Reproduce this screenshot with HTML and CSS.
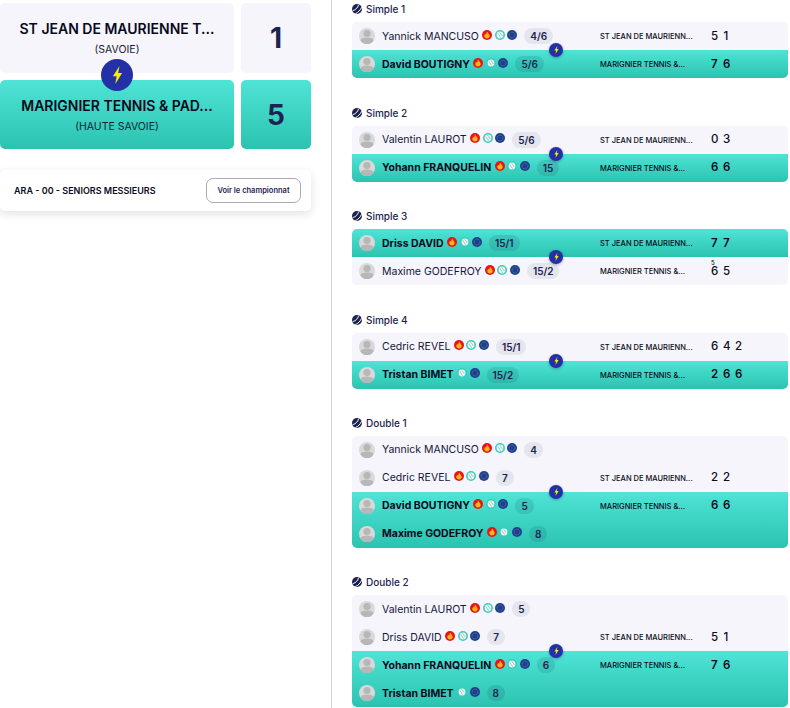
FILE: index.html
```html
<!DOCTYPE html>
<html lang="fr">
<head>
<meta charset="utf-8">
<title>Rencontre</title>
<link rel="stylesheet" href="styles.css">
</head>
<body>
<svg class="defs" width="0" height="0" aria-hidden="true">
  <defs>
    <symbol id="flame" viewBox="0 0 10 10"><circle cx="5" cy="5" r="5" fill="#e8141c"/><path d="M5.1 1.5C5.4 2.9 7.7 4 7.7 6 7.7 7.6 6.4 8.5 5 8.5S2.3 7.6 2.3 6C2.3 5 2.9 4.3 3.4 3.8 3.6 4.4 3.9 4.6 4.2 4.6 4.4 3.6 4.6 2.4 5.1 1.5Z" fill="#fdb515"/></symbol>
    <symbol id="ball" viewBox="0 0 10 10"><circle class="ball-ring" cx="5" cy="5" r="5"/><circle cx="5" cy="5" r="3.4" fill="#f2fbfa"/><path d="M2.8 3.2 5.6 7.8M4.6 2.1 7.4 6" stroke="#8fb5b5" stroke-width=".8" fill="none"/></symbol>
    <symbol id="eu" viewBox="0 0 10 10"><circle cx="5" cy="5" r="5" fill="#1b3f94"/><circle cx="5" cy="5" r="2.9" fill="none" stroke="#b9b24a" stroke-width=".7" stroke-dasharray=".8 .7" opacity=".75"/></symbol>
    <symbol id="avatar" viewBox="0 0 16 16"><circle cx="8" cy="8" r="8" fill="#d9d9d9"/><circle cx="8" cy="5.5" r="3.6" fill="#b7b7b7"/><path d="M1.4 12.4C2 10.4 4.6 9.6 8 9.6S14 10.4 14.6 12.4C13.2 14.8 10.8 16 8 16S2.8 14.8 1.4 12.4Z" fill="#b7b7b7"/></symbol>
    <symbol id="logo" viewBox="0 0 10 10"><circle cx="5" cy="5" r="5" fill="#1c2350"/><path d="M.8 6.6C3.6 6 6 3.6 6.6.6M3.4 9.6C6 8.6 8.6 6 9.6 3.2" stroke="#fff" stroke-width="1" fill="none"/></symbol>
    <symbol id="bolt" viewBox="0 0 10 14" preserveAspectRatio="none"><path d="M6.8 0 .8 8h3.4L3 14l6.2-8.6H5.6Z" fill="#f6f000"/></symbol>
  </defs>
</svg>
<main class="page">
  <aside class="summary">
    <div class="scoreboard">
      <div class="club"><strong class="club-name">ST JEAN DE MAURIENNE T...</strong><span class="club-dept">(SAVOIE)</span></div>
      <div class="total">1</div>
      <div class="club win"><strong class="club-name">MARIGNIER TENNIS &amp; PAD...</strong><span class="club-dept">(HAUTE SAVOIE)</span></div>
      <div class="total win">5</div>
      <div class="versus"><svg class="versus-bolt"><use href="#bolt"/></svg></div>
    </div>
    <div class="league">
      <span class="league-name">ARA - 00 - SENIORS MESSIEURS</span>
      <button class="league-btn" type="button">Voir le championnat</button>
    </div>
  </aside>

  <section class="matches">

    <article class="match">
      <h3 class="match-title"><svg class="logo"><use href="#logo"/></svg>Simple 1</h3>
      <div class="card">
        <div class="team">
          <div class="row"><div class="player"><svg class="avatar"><use href="#avatar"/></svg><span class="name">Yannick MANCUSO</span><span class="icons"><svg><use href="#flame"/></svg><svg><use href="#ball"/></svg><svg><use href="#eu"/></svg></span><span class="rank">4/6</span></div><span class="team-name">ST JEAN DE MAURIENN...</span><span class="sets"><span>5</span><span>1</span></span></div>
        </div>
        <div class="team win">
          <div class="row"><div class="player"><svg class="avatar"><use href="#avatar"/></svg><span class="name">David BOUTIGNY</span><span class="icons"><svg><use href="#flame"/></svg><svg><use href="#ball"/></svg><svg><use href="#eu"/></svg></span><span class="rank">5/6</span></div><span class="team-name">MARIGNIER TENNIS &amp;...</span><span class="sets"><span>7</span><span>6</span></span></div>
        </div>
        <div class="badge"><svg><use href="#bolt"/></svg></div>
      </div>
    </article>

    <article class="match">
      <h3 class="match-title"><svg class="logo"><use href="#logo"/></svg>Simple 2</h3>
      <div class="card">
        <div class="team">
          <div class="row"><div class="player"><svg class="avatar"><use href="#avatar"/></svg><span class="name">Valentin LAUROT</span><span class="icons"><svg><use href="#flame"/></svg><svg><use href="#ball"/></svg><svg><use href="#eu"/></svg></span><span class="rank">5/6</span></div><span class="team-name">ST JEAN DE MAURIENN...</span><span class="sets"><span>0</span><span>3</span></span></div>
        </div>
        <div class="team win">
          <div class="row"><div class="player"><svg class="avatar"><use href="#avatar"/></svg><span class="name">Yohann FRANQUELIN</span><span class="icons"><svg><use href="#flame"/></svg><svg><use href="#ball"/></svg><svg><use href="#eu"/></svg></span><span class="rank">15</span></div><span class="team-name">MARIGNIER TENNIS &amp;...</span><span class="sets"><span>6</span><span>6</span></span></div>
        </div>
        <div class="badge"><svg><use href="#bolt"/></svg></div>
      </div>
    </article>

    <article class="match">
      <h3 class="match-title"><svg class="logo"><use href="#logo"/></svg>Simple 3</h3>
      <div class="card">
        <div class="team win">
          <div class="row"><div class="player"><svg class="avatar"><use href="#avatar"/></svg><span class="name">Driss DAVID</span><span class="icons"><svg><use href="#flame"/></svg><svg><use href="#ball"/></svg><svg><use href="#eu"/></svg></span><span class="rank">15/1</span></div><span class="team-name">ST JEAN DE MAURIENN...</span><span class="sets"><span>7</span><span>7</span></span></div>
        </div>
        <div class="team">
          <div class="row"><div class="player"><svg class="avatar"><use href="#avatar"/></svg><span class="name">Maxime GODEFROY</span><span class="icons"><svg><use href="#flame"/></svg><svg><use href="#ball"/></svg><svg><use href="#eu"/></svg></span><span class="rank">15/2</span></div><span class="team-name">MARIGNIER TENNIS &amp;...</span><span class="sets"><span class="tie">6<sup class="tie-score">5</sup></span><span>5</span></span></div>
        </div>
        <div class="badge"><svg><use href="#bolt"/></svg></div>
      </div>
    </article>

    <article class="match">
      <h3 class="match-title"><svg class="logo"><use href="#logo"/></svg>Simple 4</h3>
      <div class="card">
        <div class="team">
          <div class="row"><div class="player"><svg class="avatar"><use href="#avatar"/></svg><span class="name">Cedric REVEL</span><span class="icons"><svg><use href="#flame"/></svg><svg><use href="#ball"/></svg><svg><use href="#eu"/></svg></span><span class="rank">15/1</span></div><span class="team-name">ST JEAN DE MAURIENN...</span><span class="sets"><span>6</span><span>4</span><span>2</span></span></div>
        </div>
        <div class="team win">
          <div class="row"><div class="player"><svg class="avatar"><use href="#avatar"/></svg><span class="name">Tristan BIMET</span><span class="icons"><svg><use href="#ball"/></svg><svg><use href="#eu"/></svg></span><span class="rank">15/2</span></div><span class="team-name">MARIGNIER TENNIS &amp;...</span><span class="sets"><span>2</span><span>6</span><span>6</span></span></div>
        </div>
        <div class="badge"><svg><use href="#bolt"/></svg></div>
      </div>
    </article>

    <article class="match double">
      <h3 class="match-title"><svg class="logo"><use href="#logo"/></svg>Double 1</h3>
      <div class="card">
        <div class="team">
          <div class="row"><div class="player"><svg class="avatar"><use href="#avatar"/></svg><span class="name">Yannick MANCUSO</span><span class="icons"><svg><use href="#flame"/></svg><svg><use href="#ball"/></svg><svg><use href="#eu"/></svg></span><span class="rank">4</span></div></div>
          <div class="row"><div class="player"><svg class="avatar"><use href="#avatar"/></svg><span class="name">Cedric REVEL</span><span class="icons"><svg><use href="#flame"/></svg><svg><use href="#ball"/></svg><svg><use href="#eu"/></svg></span><span class="rank">7</span></div><span class="team-name">ST JEAN DE MAURIENN...</span><span class="sets"><span>2</span><span>2</span></span></div>
        </div>
        <div class="team win">
          <div class="row"><div class="player"><svg class="avatar"><use href="#avatar"/></svg><span class="name">David BOUTIGNY</span><span class="icons"><svg><use href="#flame"/></svg><svg><use href="#ball"/></svg><svg><use href="#eu"/></svg></span><span class="rank">5</span></div><span class="team-name">MARIGNIER TENNIS &amp;...</span><span class="sets"><span>6</span><span>6</span></span></div>
          <div class="row"><div class="player"><svg class="avatar"><use href="#avatar"/></svg><span class="name">Maxime GODEFROY</span><span class="icons"><svg><use href="#flame"/></svg><svg><use href="#ball"/></svg><svg><use href="#eu"/></svg></span><span class="rank">8</span></div></div>
        </div>
        <div class="badge"><svg><use href="#bolt"/></svg></div>
      </div>
    </article>

    <article class="match double">
      <h3 class="match-title"><svg class="logo"><use href="#logo"/></svg>Double 2</h3>
      <div class="card">
        <div class="team">
          <div class="row"><div class="player"><svg class="avatar"><use href="#avatar"/></svg><span class="name">Valentin LAUROT</span><span class="icons"><svg><use href="#flame"/></svg><svg><use href="#ball"/></svg><svg><use href="#eu"/></svg></span><span class="rank">5</span></div></div>
          <div class="row"><div class="player"><svg class="avatar"><use href="#avatar"/></svg><span class="name">Driss DAVID</span><span class="icons"><svg><use href="#flame"/></svg><svg><use href="#ball"/></svg><svg><use href="#eu"/></svg></span><span class="rank">7</span></div><span class="team-name">ST JEAN DE MAURIENN...</span><span class="sets"><span>5</span><span>1</span></span></div>
        </div>
        <div class="team win">
          <div class="row"><div class="player"><svg class="avatar"><use href="#avatar"/></svg><span class="name">Yohann FRANQUELIN</span><span class="icons"><svg><use href="#flame"/></svg><svg><use href="#ball"/></svg><svg><use href="#eu"/></svg></span><span class="rank">6</span></div><span class="team-name">MARIGNIER TENNIS &amp;...</span><span class="sets"><span>7</span><span>6</span></span></div>
          <div class="row"><div class="player"><svg class="avatar"><use href="#avatar"/></svg><span class="name">Tristan BIMET</span><span class="icons"><svg><use href="#ball"/></svg><svg><use href="#eu"/></svg></span><span class="rank">8</span></div></div>
        </div>
        <div class="badge"><svg><use href="#bolt"/></svg></div>
      </div>
    </article>

  </section>
</main>
</body>
</html>
```
FILE: styles.css
```css
* { box-sizing: border-box; }
html, body { margin: 0; padding: 0; background: #fff; }
body { font-family: "Inter", "Liberation Sans", sans-serif; color: #0b0c20; overflow: hidden; height: 708px; }
.defs { position: absolute; }

.page { display: flex; align-items: stretch; height: 708px; overflow: hidden; }

.summary { flex: 0 0 311px; padding-top: 3px; }
.scoreboard { position: relative; display: grid; grid-template-columns: 234px 70px; grid-template-rows: 70px 69px; gap: 7px; }
.club, .total { background: #f6f5fb; border-radius: 5px; }
.club { display: flex; flex-direction: column; align-items: center; justify-content: center; gap: 5px; padding-top: 1px; }
.club.win, .total.win, .team.win { background: linear-gradient(180deg, #4fe4d6 0%, #2bc3b0 100%); }
.club-name { font-size: 14px; font-weight: 600; line-height: 18px; white-space: nowrap; color: #07091c; }
.club-dept { font-size: 10.5px; line-height: 14px; color: #1a1c33; }
.total { display: flex; align-items: center; justify-content: center; font-size: 28px; font-weight: 700; color: #1c2350; }
.versus { position: absolute; left: 101px; top: 56px; width: 32px; height: 32px; border-radius: 50%; background: #2430a5; display: flex; align-items: center; justify-content: center; }
.versus-bolt { width: 11px; height: 18px; }

.league { margin-top: 21px; height: 41px; display: flex; align-items: center; justify-content: space-between; padding: 0 10px 0 14px; background: #fff; border-radius: 5px; box-shadow: 0 3px 10px rgba(30, 30, 80, .13); }
.league-name { font-size: 9px; font-weight: 600; color: #0b0c20; white-space: nowrap; }
.league-btn { width: 95px; height: 25px; padding: 0; border: 1px solid #aaaab4; border-radius: 7px; background: #fff; font: 600 7.5px "Inter", "Liberation Sans", sans-serif; color: #1c2350; }

.matches { margin-left: 20px; border-left: 1px solid #d5d5d8; padding: 3.4px 2px 0 20px; flex: 1 1 auto; min-width: 0; }
.match { margin-bottom: 28.4px; }
.match-title { display: flex; align-items: flex-start; gap: 4px; height: 19px; margin: 0; font-size: 10px; line-height: 13px; font-weight: 500; color: #1c2350; }
.logo { flex: none; width: 10px; height: 10px; margin-top: 1px; }

.card { position: relative; }
.team { background: #f6f5fb; }
.team:first-child { border-radius: 5px 5px 0 0; }
.team:nth-child(2) { border-radius: 0 0 5px 5px; }
.row { height: 28px; display: flex; align-items: center; padding-left: 7px; }
.player { flex: 0 0 241px; display: flex; align-items: center; min-width: 0; }
.avatar { flex: none; width: 16px; height: 16px; margin-right: 7px; }
.name { font-size: 10.5px; white-space: nowrap; color: #14163a; }
.win .name { font-weight: 700; color: #07091c; }
.icons { display: flex; gap: 2.5px; margin: -3px 0 0 3.5px; align-items: center; }
.icons svg { width: 10px; height: 10px; display: block; }
.ball-ring { fill: #38cdbd; }
.win .ball-ring { fill: #5de0d2; }
.rank { margin-left: 7px; min-width: 18px; height: 16px; padding: 0 6px; border-radius: 8px; background: #e5e5ed; font-size: 10px; font-weight: 600; line-height: 16px; text-align: center; color: #1c2350; }
.win .rank { background: rgba(20, 90, 100, .16); }
.team-name { flex: 0 0 111px; font-size: 7.5px; font-weight: 500; line-height: 11px; padding-top: 1px; white-space: nowrap; color: #0b0c20; }
.sets { display: flex; gap: 6px; font-size: 11.5px; font-weight: 500; color: #0b0c20; }
.win .sets { font-weight: 600; }
.sets span { width: 6px; text-align: center; line-height: 13px; }
.tie { position: relative; }
.tie-score { position: absolute; left: 0; top: -6px; font-size: 6px; line-height: 7px; }

.badge { position: absolute; left: 197px; top: 21px; width: 14px; height: 14px; border-radius: 50%; background: #2430a5; box-shadow: 0 1px 3px rgba(30, 30, 80, .35); display: flex; align-items: center; justify-content: center; }
.badge svg { width: 5px; height: 8px; }
.double .badge { top: 49px; }
```
